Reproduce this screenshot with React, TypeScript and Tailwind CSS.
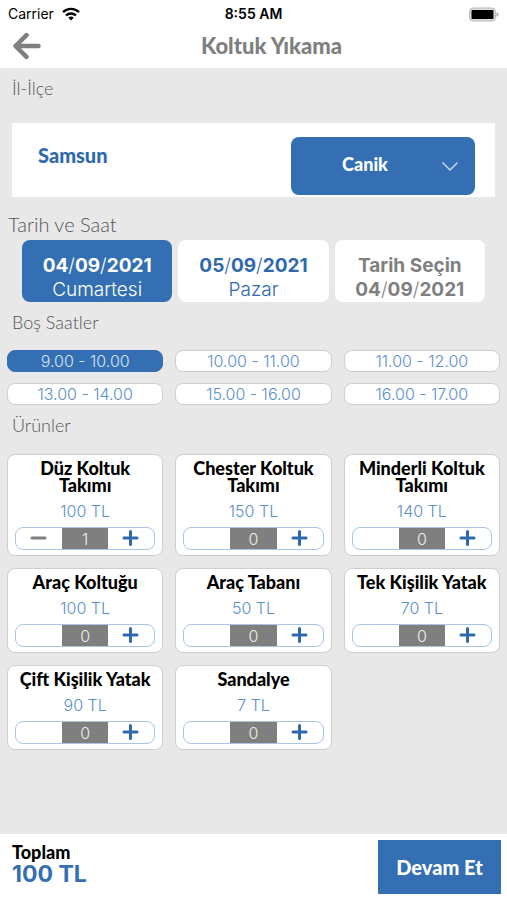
import { useState } from "react";

interface Product {
  id: number;
  name: string;
  price: number;
}

const DISTRICTS = ["Canik", "Atakum", "İlkadım"];

const SLOTS = [
  "9.00 - 10.00",
  "10.00 - 11.00",
  "11.00 - 12.00",
  "13.00 - 14.00",
  "15.00 - 16.00",
  "16.00 - 17.00",
];

const PRODUCTS: Product[] = [
  { id: 1, name: "Düz Koltuk Takımı", price: 100 },
  { id: 2, name: "Chester Koltuk Takımı", price: 150 },
  { id: 3, name: "Minderli Koltuk Takımı", price: 140 },
  { id: 4, name: "Araç Koltuğu", price: 100 },
  { id: 5, name: "Araç Tabanı", price: 50 },
  { id: 6, name: "Tek Kişilik Yatak", price: 70 },
  { id: 7, name: "Çift Kişilik Yatak", price: 90 },
  { id: 8, name: "Sandalye", price: 7 },
];

function StatusBar() {
  return (
    <div className="grid h-7 grid-cols-3 items-center px-2 font-['Inter',sans-serif] text-sm text-black">
      <div className="flex items-center gap-2">
        <span>Carrier</span>
        <svg width="18" height="14" viewBox="0 0 18 14" fill="none" stroke="currentColor" strokeWidth="2.4">
          <path d="M1 5.2a11.4 11.4 0 0 1 16 0" />
          <path d="M4 8.5a7.2 7.2 0 0 1 10 0" />
          <path d="M9 13.6 6.3 10.8a3.9 3.9 0 0 1 5.4 0Z" fill="currentColor" stroke="none" />
        </svg>
      </div>
      <span className="text-center font-semibold">8:55 AM</span>
      <svg className="justify-self-end" width="31" height="15" viewBox="0 0 31 15">
        <rect x="1.5" y="1" width="26" height="13" rx="3.5" fill="#dcdcdc" stroke="#b9b9b9" />
        <rect x="3.5" y="3" width="22" height="9" rx="1" fill="#000" />
        <path d="M28.5 5.2v4.6c1.6-.7 2-1.4 2-2.3s-.4-1.6-2-2.3Z" fill="#b0b0b0" />
      </svg>
    </div>
  );
}

function DateText({ value }: { value: string }) {
  const [day, month, year] = value.split("/");
  return (
    <span className="font-bold">
      {day}
      <span className="font-light">/</span>
      {month}
      <span className="font-light">/</span>
      {year}
    </span>
  );
}

interface ProductCardProps {
  product: Product;
  count: number;
  onChange: (count: number) => void;
}

function ProductCard({ product, count, onChange }: ProductCardProps) {
  return (
    <div className="flex flex-col rounded-lg border border-[#cfcfcf] bg-white px-[7px] py-[5px] text-center">
      <h3 className="text-lg leading-[17px] font-black text-black">{product.name}</h3>
      <p className="mt-[5px] font-['Inter',sans-serif] text-base leading-6 font-light text-[#5b8fcb]">
        {product.price} TL
      </p>
      <div className="mt-1 grid h-[23px] grid-cols-3 overflow-hidden rounded-lg border border-[#a9c4e4]">
        <button
          aria-label={`${product.name} azalt`}
          disabled={count === 0}
          onClick={() => onChange(count - 1)}
          className="flex items-center justify-center text-[#7f7f7f]"
        >
          {count > 0 && (
            <svg width="18" height="18" viewBox="0 0 18 18" stroke="currentColor" strokeWidth="3" strokeLinecap="round">
              <path d="M2 8h13" />
            </svg>
          )}
        </button>
        <span className="bg-[#7f7f7f] font-['Inter',sans-serif] text-base leading-[22px] font-light text-[#eeeeee]">
          {count}
        </span>
        <button
          aria-label={`${product.name} artır`}
          onClick={() => onChange(count + 1)}
          className="flex items-center justify-center text-[#2e69ae]"
        >
          <svg width="18" height="18" viewBox="0 0 18 18" stroke="currentColor" strokeWidth="3" strokeLinecap="round">
            <path d="M2 8h13M8.5 1.5v13" />
          </svg>
        </button>
      </div>
    </div>
  );
}

export default function App() {
  const [district, setDistrict] = useState("Canik");
  const [day, setDay] = useState(0);
  const [slot, setSlot] = useState(SLOTS[0]);
  const [counts, setCounts] = useState<Record<number, number>>({ 1: 1 });

  const total = PRODUCTS.reduce((sum, p) => sum + p.price * (counts[p.id] ?? 0), 0);

  const dayClass = (active: boolean) =>
    `flex h-[62px] flex-col items-center justify-end rounded-lg text-[19px] leading-6 ${
      active ? "bg-[#336fb2] text-white" : "bg-white text-[#2e69ae]"
    }`;

  return (
    <div className="flex min-h-screen flex-col bg-[#e8e8e8] font-['Lato',sans-serif]">
      <header className="bg-white">
        <StatusBar />
        <div className="grid h-10 grid-cols-[40px_1fr] items-center pr-3 pb-1 pl-2">
          <button aria-label="Geri" className="flex justify-center text-[#7f7f7f]">
            <svg width="30" height="28" viewBox="0 0 30 28" fill="none" stroke="currentColor" strokeWidth="4.5" strokeLinecap="round" strokeLinejoin="round">
              <path d="M13.5 3.2 2.500 14l11 10.8M3 14h22.500" />
            </svg>
          </button>
          <h1 className="text-center text-[22px] leading-8 font-black text-[#7f7f7f]">Koltuk Yıkama</h1>
        </div>
      </header>

      <main className="flex-1">
        <h2 className="px-3 pt-2 text-lg leading-6 font-light text-[#555555]">İl-İlçe</h2>
        <div className="mx-3 mt-[23px] flex h-[74px] items-end justify-between bg-white pr-5 pb-0.5 pl-[26px]">
          <label htmlFor="district" className="self-start pt-5 text-xl leading-6 font-black text-[#2e69ae]">
            Samsun
          </label>
          <div className="relative w-[184px]">
            <select
              id="district"
              value={district}
              onChange={(e) => setDistrict(e.target.value)}
              className="h-[58px] w-full appearance-none rounded-lg bg-[#336fb2] pr-9 pb-1 text-center text-lg font-black text-white"
            >
              {DISTRICTS.map((d) => (
                <option key={d}>{d}</option>
              ))}
            </select>
            <svg className="pointer-events-none absolute top-6 right-4" width="18" height="12" viewBox="0 0 18 12" fill="none" stroke="#c5d6ea" strokeWidth="1.5">
              <path d="m1.5 1.5 7.5 7.5 7.5-7.5" />
            </svg>
          </div>
        </div>

        <h2 className="px-2 pt-[15px] text-xl leading-6 font-light text-[#555555]">Tarih ve Saat</h2>
        <div className="mt-1 grid grid-cols-3 gap-1.5 px-[22px] font-['Inter',sans-serif]">
          <button onClick={() => setDay(0)} className={dayClass(day === 0)}>
            <DateText value="04/09/2021" />
            <span className="font-light">Cumartesi</span>
          </button>
          <button onClick={() => setDay(1)} className={dayClass(day === 1)}>
            <DateText value="05/09/2021" />
            <span className="font-light">Pazar</span>
          </button>
          <button className="flex h-[62px] flex-col items-center justify-end rounded-lg bg-white text-[19px] leading-6 text-[#7f7f7f]">
            <span className="font-bold">Tarih Seçin</span>
            <DateText value="04/09/2021" />
          </button>
        </div>

        <h2 className="px-3 pt-2 text-lg leading-6 font-light text-[#555555]">Boş Saatler</h2>
        <div className="mt-4 grid grid-cols-3 gap-x-3 gap-y-[11px] px-[7px] font-['Inter',sans-serif]">
          {SLOTS.map((s) => (
            <button
              key={s}
              onClick={() => setSlot(s)}
              className={`h-[22px] rounded-lg border text-base leading-5 font-light ${
                s === slot
                  ? "border-[#336fb2] bg-[#336fb2] text-[#d6e4f4]"
                  : "border-[#cfcfcf] bg-white text-[#5b8fcb]"
              }`}
            >
              {s}
            </button>
          ))}
        </div>

        <h2 className="px-3 pt-2 text-lg leading-6 font-light text-[#555555]">Ürünler</h2>
        <div className="mt-[17px] grid grid-cols-3 gap-3 px-[7px] pb-4">
          {PRODUCTS.map((p) => (
            <ProductCard
              key={p.id}
              product={p}
              count={counts[p.id] ?? 0}
              onChange={(count) => setCounts({ ...counts, [p.id]: count })}
            />
          ))}
        </div>
      </main>

      <footer className="flex items-center justify-between bg-white py-1.5 pr-1.5 pl-3">
        <div className="pb-1.5">
          <p className="text-lg leading-5 font-black text-black">Toplam</p>
          <p className="font-['Inter',sans-serif] text-[23px] leading-6 font-bold text-[#336fb2]">{total} TL</p>
        </div>
        <button className="h-[54px] w-[123px] bg-[#336fb2] text-xl font-black text-white">Devam Et</button>
      </footer>
    </div>
  );
}
